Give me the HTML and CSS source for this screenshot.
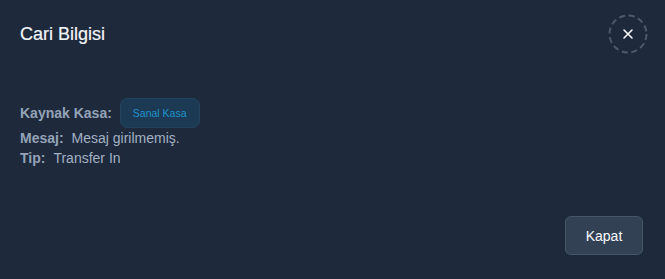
FILE: index.html
```html
<!DOCTYPE html>
<html lang="tr">
<head>
<meta charset="utf-8">
<title>Cari Bilgisi</title>
<link rel="stylesheet" href="styles.css">
</head>
<body>
<div class="modal">
  <header class="modal-header">
    <h2 class="modal-title">Cari Bilgisi</h2>
    <button class="close-btn" aria-label="Kapat">
      <svg width="40" height="40" viewBox="0 0 40 40">
        <circle cx="20" cy="20" r="18.5" fill="none" stroke="#4b5a6f" stroke-width="2" stroke-dasharray="6 3.7"/>
        <path d="M16 16L24 24M24 16L16 24" stroke="#f8fafc" stroke-width="1.6" stroke-linecap="round"/>
      </svg>
    </button>
  </header>
  <section class="modal-body">
    <div class="row row-badge">
      <span class="label">Kaynak Kasa:</span>
      <span class="badge">Sanal Kasa</span>
    </div>
    <div class="row">
      <span class="label">Mesaj:</span>
      <span class="value">Mesaj girilmemiş.</span>
    </div>
    <div class="row">
      <span class="label">Tip:</span>
      <span class="value">Transfer In</span>
    </div>
  </section>
  <footer class="modal-footer">
    <button class="btn">Kapat</button>
  </footer>
</div>
</body>
</html>
```

FILE: styles.css
```css
html, body {
  margin: 0;
  padding: 0;
  background: #1e293b;
}
body {
  font-family: "Liberation Sans", Arial, sans-serif;
  color: #94a3b8;
}
.modal {
  height: 279px;
  display: flex;
  flex-direction: column;
  box-sizing: border-box;
}
.modal-header {
  display: flex;
  align-items: center;
  justify-content: space-between;
  padding: 14px 17px 0 20px;
  height: 40px;
}
.modal-title {
  margin: 0;
  font-size: 18px;
  font-weight: normal;
  color: #f1f5f9;
  line-height: 22px;
  -webkit-text-stroke: 0.2px #f1f5f9;
}
.close-btn {
  width: 40px;
  height: 40px;
  border: none;
  background: transparent;
  display: flex;
  align-items: center;
  justify-content: center;
  padding: 0;
  cursor: pointer;
}
.modal-body {
  padding: 44px 20px 0 20px;
  flex: 1;
}
.row {
  display: flex;
  align-items: center;
  gap: 8px;
  height: 20px;
  font-size: 14px;
}
.row-badge {
  height: 30px;
  gap: 8px;
}
.label {
  font-weight: bold;
  color: #94a3b8;
}
.value {
  color: #a3b1c4;
}
.badge {
  display: inline-flex;
  align-items: center;
  height: 30px;
  box-sizing: border-box;
  padding: 0 12px;
  background: #1c3a53;
  border: 1px solid #22425d;
  border-radius: 7px;
  color: #1f93cf;
  font-size: 10.5px;
}
.modal-footer {
  display: flex;
  justify-content: flex-end;
  padding: 0 22px 24px 0;
}
.btn {
  width: 78px;
  height: 39px;
  background: #334155;
  border: 1px solid #475569;
  border-radius: 6px;
  color: #f8fafc;
  font-family: "Liberation Sans", Arial, sans-serif;
  font-size: 14px;
  cursor: pointer;
}
```
